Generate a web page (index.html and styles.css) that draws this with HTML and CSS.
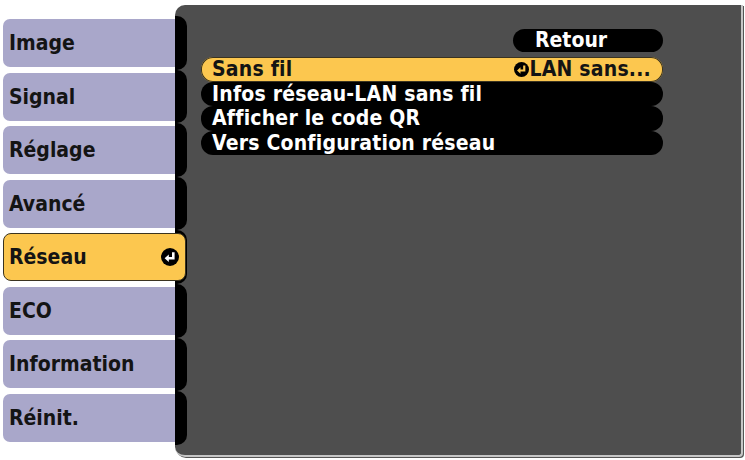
FILE: index.html
```html
<!DOCTYPE html>
<html lang="fr">
<head>
<meta charset="utf-8">
<title>Réseau</title>
<link rel="stylesheet" href="styles.css">
</head>
<body>
<div class="screen">
  <nav class="tabs">
    <div class="tab">Image</div>
    <div class="tab">Signal</div>
    <div class="tab">Réglage</div>
    <div class="tab">Avancé</div>
    <div class="tab active"><span>Réseau</span>
      <svg class="enter big" viewBox="0 0 18 18" width="18" height="18"><circle cx="9" cy="9" r="9" fill="#000"/><path d="M12.3 4.2 V10.2 H7" fill="none" stroke="#fff" stroke-width="2.6"/><path d="M3.6 10.2 L7.8 6.4 L7.8 14 Z" fill="#fff"/></svg>
    </div>
    <div class="tab">ECO</div>
    <div class="tab">Information</div>
    <div class="tab">Réinit.</div>
  </nav>
  <section class="panel">
    <div class="connectors">
      <span></span><span></span><span></span><span></span><span></span><span></span><span></span><span></span>
    </div>
    <div class="content">
      <div class="back-row"><div class="back">Retour</div></div>
      <ul class="list">
        <li class="item selected"><span>Sans fil</span><span class="value"><svg class="enter" viewBox="0 0 18 18" width="15" height="15"><circle cx="9" cy="9" r="9" fill="#000"/><path d="M12.3 4.2 V10.2 H7" fill="none" stroke="#fcc74f" stroke-width="2.6"/><path d="M3.6 10.2 L7.8 6.4 L7.8 14 Z" fill="#fcc74f"/></svg>LAN sans...</span></li>
        <li class="item"><span>Infos réseau-LAN sans fil</span></li>
        <li class="item"><span>Afficher le code QR</span></li>
        <li class="item"><span>Vers Configuration réseau</span></li>
      </ul>
    </div>
  </section>
</div>
</body>
</html>
```

FILE: styles.css
```css
html, body {
  margin: 0;
  padding: 0;
  background: #ffffff;
}
body {
  font-family: "DejaVu Sans Condensed", "DejaVu Sans", sans-serif;
  font-weight: bold;
}
.screen {
  display: flex;
  width: 745px;
  height: 460px;
}
.tabs {
  position: relative;
  z-index: 2;
  flex: none;
  width: 172px;
  margin-left: 3px;
  padding-top: 19px;
  display: flex;
  flex-direction: column;
  gap: 5.57px;
}
.tab {
  box-sizing: border-box;
  height: 48px;
  background: #a9a7ca;
  border-radius: 7px 0 0 7px;
  display: flex;
  align-items: center;
  padding-left: 6px;
  font-size: 21px;
  color: #141414;
}
.tab.active {
  background: #fcc74f;
  border: 1px solid #3a3320;
  border-radius: 8px;
  margin-right: -11px;
  padding-left: 5px;
  padding-right: 6px;
  justify-content: space-between;
}
.enter { display: block; flex: none; }
.panel {
  flex: none;
  box-sizing: border-box;
  width: 568px;
  height: 452px;
  margin-top: 5px;
  background: #4e4e4e;
  border-radius: 10px 0 4px 10px;
  border-right: 2px solid #c6c6c6;
  border-bottom: 2px solid #c6c6c6;
  box-shadow: 1px 1px 0 #555;
  display: flex;
}
.connectors {
  flex: none;
  width: 12px;
  padding-top: 11.2px;
  display: flex;
  flex-direction: column;
}
.connectors span {
  height: 53.57px;
  background: #000;
  border-radius: 0 10px 10px 0;
}
.content {
  flex: 1;
  padding: 24px 78px 0 14px;
}
.back-row {
  display: flex;
  justify-content: flex-end;
  margin-bottom: 5px;
}
.back {
  box-sizing: border-box;
  width: 150px;
  height: 23px;
  line-height: 23px;
  background: #000;
  color: #fff;
  border-radius: 12px;
  padding-left: 22px;
  font-size: 21px;
}
.list {
  list-style: none;
  margin: 0;
  padding: 0;
}
.item {
  box-sizing: border-box;
  height: 24.5px;
  background: #000;
  color: #fff;
  border-radius: 12px;
  padding: 0 12px 0 11px;
  display: flex;
  align-items: center;
  justify-content: space-between;
  font-size: 21px;
  letter-spacing: 0.2px;
  white-space: nowrap;
}
.item.selected {
  background: #fcc74f;
  color: #141414;
  box-shadow: inset 0 0 0 1px #3a3320;
}
.value {
  display: flex;
  align-items: center;
  gap: 1px;
}
```
